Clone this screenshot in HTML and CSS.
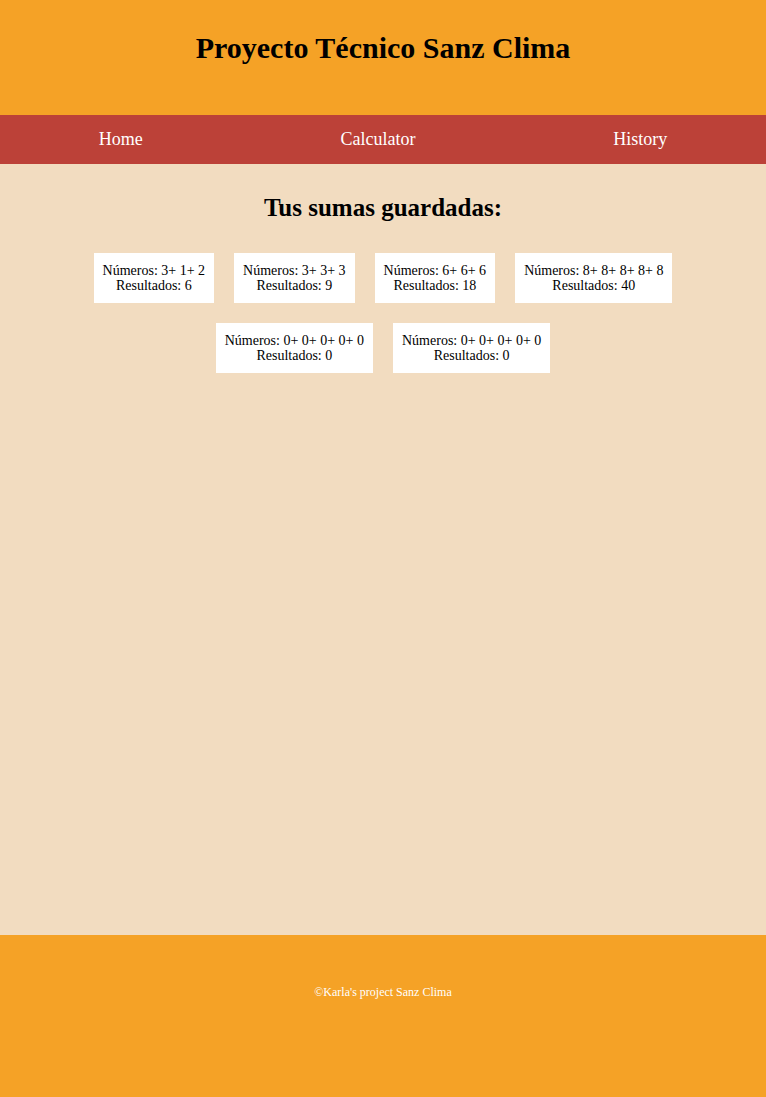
FILE: index.html
```html
<!DOCTYPE html>
<html lang="es">
<head>
<meta charset="utf-8">
<title>Proyecto Técnico Sanz Clima</title>
<link rel="stylesheet" href="styles.css">
</head>
<body>
<div class="page">
  <header class="header">
    <h1 class="title">Proyecto Técnico Sanz Clima</h1>
  </header>
  <nav class="nav">
    <a class="nav-link" href="#">Home</a>
    <a class="nav-link" href="#">Calculator</a>
    <a class="nav-link" href="#">History</a>
  </nav>
  <main class="main">
    <h2 class="subtitle">Tus sumas guardadas:</h2>
    <div class="cards">
      <div class="card"><p>Números: 3+ 1+ 2</p><p>Resultados: 6</p></div>
      <div class="card"><p>Números: 3+ 3+ 3</p><p>Resultados: 9</p></div>
      <div class="card"><p>Números: 6+ 6+ 6</p><p>Resultados: 18</p></div>
      <div class="card"><p>Números: 8+ 8+ 8+ 8+ 8</p><p>Resultados: 40</p></div>
      <div class="card"><p>Números: 0+ 0+ 0+ 0+ 0</p><p>Resultados: 0</p></div>
      <div class="card"><p>Números: 0+ 0+ 0+ 0+ 0</p><p>Resultados: 0</p></div>
    </div>
  </main>
  <footer class="footer">
    <p class="copy">©Karla's project Sanz Clima</p>
  </footer>
</div>
</body>
</html>
```
FILE: styles.css
```css
html, body {
  margin: 0;
  padding: 0;
}
body {
  font-family: "Liberation Serif", "Times New Roman", serif;
  color: #000;
  background: #f2dcc0;
}
.page {
  display: flex;
  flex-direction: column;
  min-height: 1097px;
}
.header {
  background: #f5a226;
  height: 115px;
  display: flex;
  justify-content: center;
  box-sizing: border-box;
  padding-top: 29px;
}
.title {
  margin: 0;
  font-size: 30px;
  font-weight: bold;
  line-height: 37px;
}
.nav {
  background: #bc4138;
  height: 49px;
  display: flex;
  justify-content: space-around;
  align-items: center;
}
.nav-link {
  color: #fff;
  text-decoration: none;
  font-size: 18px;
}
.main {
  flex: 1;
  background: #f2dcc0;
  display: flex;
  flex-direction: column;
  align-items: center;
  padding-top: 30px;
}
.subtitle {
  margin: 0 0 31px;
  font-size: 25px;
  font-weight: bold;
  line-height: 28px;
}
.cards {
  display: flex;
  flex-wrap: wrap;
  justify-content: center;
  gap: 20px;
  max-width: 600px;
}
.card {
  background: #fff;
  padding: 10px 9px;
  height: 50px;
  box-sizing: border-box;
  display: flex;
  flex-direction: column;
  align-items: center;
  justify-content: center;
  font-size: 14px;
  line-height: 15px;
}
.card p {
  margin: 0;
}
.footer {
  background: #f5a226;
  height: 162px;
  display: flex;
  justify-content: center;
  padding-top: 50px;
  box-sizing: border-box;
}
.copy {
  margin: 0;
  color: #fff;
  font-size: 12px;
  line-height: 14px;
}
```
